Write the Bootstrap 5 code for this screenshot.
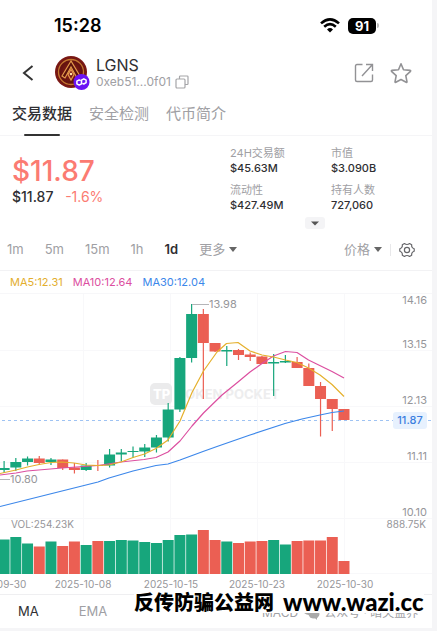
<!DOCTYPE html>
<html lang="zh-CN">
<head>
<meta charset="utf-8">
<meta name="viewport" content="width=device-width, initial-scale=1">
<title>LGNS</title>
<link href="https://cdn.jsdelivr.net/npm/bootstrap@5.3.0/dist/css/bootstrap.min.css" rel="stylesheet">
<style>
body{background:#f5f5f7;font-family:Inter,"Noto Sans CJK SC",sans-serif;color:#2f2f33;padding-right:5px}
.screen{background:#fff;overflow:hidden}
.screen button{border:0;background:none;padding:0;color:inherit;line-height:inherit;display:inline-flex;align-items:center}
.screen svg{display:block;flex:none}
.muted{color:#a0a0a4}
.screen .ink{color:#2f2f33}
.statusbar{height:51px;padding:0 53px 0 54px}
.clock{font-size:18px;font-weight:600;line-height:24px;color:#000}
.batt{width:28px;height:16px;border-radius:5px;background:#000;color:#fff;font-size:13px;font-weight:700;line-height:16px;text-align:center}
.batt-tip{width:2px;height:5px;border-radius:0 2px 2px 0;background:#bbb;margin-left:1px}
.titlebar{height:43px;padding:0 20px}
.token{font-size:16px;line-height:18px}
.addr{font-size:12px;line-height:16px}
.coin{margin:0 6px 0 16px}
.tabs{height:42px;padding:0 12px;gap:17px;font-size:15px;border-bottom:1px solid #f5f5f7}
.tabs .active-tab{font-weight:500;position:relative}
.tabs .active-tab::after{content:"";position:absolute;left:12px;right:12px;bottom:-1px;height:2px;border-radius:1px;background:#333}
.summary{height:81px;padding:9px 12px 0}
.price{font-size:28px;font-weight:500;line-height:34px;margin-top:9px;color:#fb7b72}
.subprice{font-size:14px;line-height:18px;font-weight:500}
.down{color:#fb7b72;font-weight:400;margin-left:8px}
.stats{width:190px;margin:0;font-size:11px;line-height:16px}
.stats dt{font-weight:400}
.stats dd{font-weight:500;margin:0 0 6px;line-height:15px}
.stats .mcap{width:101px}
.expander{padding:0 12px;height:12px}
.screen .expander button{width:20px;height:12px;border-radius:3px;background:#f4f4f6;justify-content:center;margin-left:293px}
.periods{height:41px;padding:0 17px 0 7px;font-size:13px}
.period-list{gap:21px}
.periods .on{font-weight:600;color:#2f2f33}
.bar{width:1px;height:12px;background:#e8e8ea}
.legend-row{height:24px;padding:0 10px;gap:10px;font-size:11px;border-top:1px solid #f2f2f4;border-bottom:1px solid #f7f7f9}
.ma5{color:#e3ae2d}.ma10{color:#dc4fa0}.ma30{color:#3c87ea}
.chart{width:100%;height:auto}
.bottom-tabs{height:34px;padding:0 18px;gap:40px;font-size:13px;border-top:1px solid #efeff1;position:relative}
.behind{position:absolute;top:9px;left:262px;font-size:12px;line-height:18px;white-space:nowrap}
.banner{position:absolute;left:134px;top:-3px;height:21px;background:#fff;color:#000;line-height:22px;gap:9px;white-space:nowrap}
.banner b{font-size:20px;font-weight:900}
.banner .site{font-family:Lato,Inter,sans-serif;font-size:24px;line-height:19px}
</style>
<script src="https://cdn.jsdelivr.net/npm/bootstrap@5.3.0/dist/js/bootstrap.bundle.min.js"></script>
</head>
<body>
<main class="screen">
  <div class="statusbar d-flex align-items-center">
    <span class="clock me-auto">15:28</span>
    <svg class="me-2" width="20" height="15" viewBox="0 0 20 15" fill="none" stroke="#000" stroke-width="2.6"><path d="M1 5.4Q10-2.6 19 5.4M4.2 8.8Q10 3.6 15.8 8.8"/><path d="M7 11.4Q10 8.8 13 11.4L10 14.4Z" fill="#000" stroke="none"/></svg>
    <span class="batt">91</span><span class="batt-tip"></span>
  </div>
  <header class="titlebar d-flex align-items-center">
    <button aria-label="返回"><svg width="16" height="18" viewBox="0 0 16 18" fill="none" stroke="#333" stroke-width="2"><path d="M12.500 2L4 9l8.500 7"/></svg></button>
    <svg class="coin" width="38" height="36" viewBox="0 0 38 36">
      <defs><radialGradient id="coin"><stop offset="0" stop-color="#94211b"/><stop offset=".65" stop-color="#64120f"/><stop offset="1" stop-color="#7e1915"/></radialGradient></defs>
      <circle cx="19" cy="17" r="16" fill="url(#coin)"/>
      <circle cx="19" cy="17" r="12.500" fill="none" stroke="#c47830" stroke-width="1.300"/>
      <path d="M19 6L10 21l3 2 6-11 6 11 3-2Z" fill="#5b100c" stroke="#e49b4c" stroke-width="1.200"/>
      <path d="M19 14.500l3 5-3 5.500-3-5.500Z" fill="#7e1915" stroke="#e49b4c" stroke-width="1.200"/><circle cx="19" cy="19" r="1.300" fill="#ffe0a0"/>
      <circle cx="29.500" cy="27" r="8" fill="#6b12f4"/>
      <path d="M29.500 27v1.800l-2.300 1.300-2.300-1.300v-2.600l2.300-1.300 1.300.7M29.500 27v-1.900l2.300-1.300 2.300 1.300v2.600L31.800 29l-1.300-.7" fill="none" stroke="#fff" stroke-width="1.500" stroke-linejoin="round"/>
    </svg>
    <div class="me-auto">
      <div class="token">LGNS</div>
      <div class="addr muted d-flex align-items-center gap-1">0xeb51...0f01
        <button aria-label="复制"><svg width="14" height="14" viewBox="0 0 14 14" fill="none" stroke="#a5a5a8" stroke-width="1.200"><path d="M4.500 4V1.800Q4.500 1 5.300 1h6.900q.8 0 .8.800v6.900q0 .8-.8.800H10"/><rect x="1" y="4" width="9" height="9" rx="1"/></svg></button></div>
    </div>
    <button aria-label="分享" class="me-3"><svg width="20" height="20" viewBox="0 0 20 20" fill="none" stroke="#929295" stroke-width="1.400"><path d="M8.500 1.500H3Q1.500 1.500 1.500 3v14q0 1.500 1.500 1.500h14q1.500 0 1.500-1.500v-5.500M12 1.500h6.500V8M18.500 1.500L8 13"/></svg></button>
    <button aria-label="收藏"><svg width="22" height="22" viewBox="0 0 22 22" fill="none" stroke="#929295" stroke-width="1.600" stroke-linejoin="round"><path d="M11 1.800l2.500 5.900 6.800.7q.7.300.2.900l-4.700 4.300 1.200 6.200q0 .8-.8.500L11 17.500l-5.200 2.800q-.8.300-.8-.5l1.200-6.200L1.500 9.300q-.5-.6.200-.9l6.800-.7Z"/></svg></button>
  </header>
  <nav class="tabs d-flex align-items-stretch muted">
    <button class="active-tab ink">交易数据</button><button>安全检测</button><button>代币简介</button>
  </nav>
  <section class="summary d-flex justify-content-between">
    <div>
      <div class="price">$11.87</div>
      <div class="subprice">$11.87 <span class="down">-1.6%</span></div>
    </div>
    <dl class="stats d-flex">
      <div class="mcap"><dt class="muted">24H交易额</dt><dd>$45.63M</dd><dt class="muted">流动性</dt><dd>$427.49M</dd></div>
      <div><dt class="muted">市值</dt><dd>$3.090B</dd><dt class="muted">持有人数</dt><dd>727,060</dd></div>
    </dl>
  </section>
  <div class="expander d-flex align-items-start"><button aria-label="展开"><svg width="8" height="5" viewBox="0 0 8 5"><path d="M0 .5h8L4 4.500Z" fill="#555"/></svg></button></div>
  <div class="periods d-flex align-items-center muted">
    <div class="period-list d-flex"><button>1m</button><button>5m</button><button>15m</button><button>1h</button><button class="on">1d</button><button>更多<svg class="ms-1" width="8" height="5" viewBox="0 0 8 5"><path d="M0 0h8L4 5Z" fill="#666"/></svg></button></div>
    <button class="ms-auto">价格<svg class="ms-1" width="8" height="5" viewBox="0 0 8 5"><path d="M0 0h8L4 5Z" fill="#666"/></svg></button>
    <span class="bar mx-2"></span>
    <button aria-label="设置"><svg width="16" height="16" viewBox="0 0 16 16" fill="none" stroke="#66666a" stroke-width="1.200" stroke-linejoin="round"><path d="M5.500 1.500q1.200 1 2.500 1t2.500-1l2.200 1.200q-.2 1.600.4 2.600t2.100 1.500v2.400q-1.500.5-2.100 1.500t-.4 2.600l-2.200 1.200q-1.200-1-2.500-1t-2.500 1l-2.200-1.200q.2-1.600-.4-2.600T.8 9.200V6.800q1.500-.5 2.100-1.500t.4-2.600Z"/><circle cx="8" cy="8" r="2.600"/></svg></button>
  </div>
  <div class="legend-row d-flex align-items-center">
    <span class="ma5">MA5:12.31</span><span class="ma10">MA10:12.64</span><span class="ma30">MA30:12.04</span>
  </div>
  <svg class="chart" viewBox="0 294 432 300" role="img" aria-label="LGNS 日线图">
    <path d="M0 350.500H432M0 406.500H432M0 462.500H432M0 518.500H432M0 573.500H432M83.500 294V574M170.500 294V574M257.500 294V574M344.500 294V574" stroke="#f8f8fa" fill="none"/>
    <g><rect x="150" y="383" width="22" height="22" rx="5" fill="#ebebec"/><text x="153" y="399" font-size="13" font-weight="800" fill="#fff">TP</text><text x="177" y="399" font-size="13" font-weight="700" fill="#ededee">TOKEN POCKET</text></g>
    <path d="M2 420.500H432" stroke="#9fc3f3" stroke-dasharray="3 3"/>
    <g id="bars"></g>
    <g fill="none" stroke-width="1.200" stroke-linejoin="round">
      <path stroke="#3c87ea" d="M0 506.500L50 494 98 482 109 478 133 471 156 465.500 168 464 180 460 203 451.500 217 446.500 250 435 285 423.500 302 419 320 415 332 412.500 344 411"/>
      <path stroke="#dc4fa0" d="M0 475L16 473 27 471 62 468 98 465.500 121 462 144 459.500 156 457.500 168 452 180 441 192 426 203.500 413 222 395 238 382 250 372 262 363.500 273.500 356 285.500 351.500 297 352.500 308.500 360 332 371.500 344 378"/>
      <path stroke="#e5b02c" d="M0 473.500L16 470 27.500 467 39 464.500 51 462.500 62 462 74 463 86 465 98 465.500 109 465 121 462 133 457.500 144.500 454 156 448.500 168 440 180 421 192 392.500 203.500 371 217 352 226.500 343.500 238 342.500 250 351 262 355 273.500 357 285.500 360 297 362.500 308.500 368 320 375 332 384.500 344 396.500"/>
    </g>
    <path d="M192 304.500H209M0 479.500H10" stroke="#b5b5b8"/>
    <g font-size="11" fill="#96969a"><text x="209" y="308">13.98</text><text x="10" y="483">10.80</text></g>
    <g font-size="11" fill="#96969a" text-anchor="end"><text x="427" y="304">14.16</text><text x="427" y="348">13.15</text><text x="427" y="404">12.13</text><text x="427" y="460">11.11</text><text x="427" y="516">10.10</text></g>
    <g font-size="10" fill="#96969a"><text x="11" y="528">VOL:254.23K</text><text x="426" y="528" text-anchor="end">888.75K</text></g>
    <rect x="393" y="412" width="34" height="17" rx="3" fill="#e7f1fe"/><text x="410" y="424" font-size="11" font-weight="500" fill="#3c7fe0" text-anchor="middle">11.87</text>
    <g font-size="10" fill="#96969a" text-anchor="middle"><text x="-3" y="588">2025-09-30</text><text x="83" y="588">2025-10-08</text><text x="171" y="588">2025-10-15</text><text x="257" y="588">2025-10-23</text><text x="345" y="588">2025-10-30</text></g>
  </svg>
  <nav class="bottom-tabs d-flex align-items-center muted">
    <button class="ink">MA</button><button>EMA</button>
    <div class="behind d-flex"><span>MACD</span><svg class="ms-1 me-1" width="18" height="16" viewBox="0 0 18 16" fill="#aaa"><ellipse cx="7" cy="6" rx="6" ry="5"/><ellipse cx="12" cy="10" rx="5.500" ry="4.500"/><path d="M12 13l3 3v-4Z"/></svg><span>公众号 · 暗夫盘界</span></div>
    <div class="banner d-flex"><b>反传防骗公益网</b><b class="site">www.wazi.cc</b></div>
  </nav>
</main>
<script>
// Each day: direction, body top/bottom, wick top/bottom, volume top
const days = [
 [1,468,470,461,473,539.5],[1,462,467.5,458,471,537],[1,458.5,462,456.5,465.5,543.5],[0,458.5,463,456,465,546.5],
 [1,459.5,462,458,465,541.5],[0,459.5,468,459.5,470,546],[0,467.5,470,463,473.5,541.5],[1,465.5,470,463,471,545],
 [0,465,466,460,471,541],[1,454.5,465.5,449,467.5,541],[1,452.5,454.5,449,461.5,540],[1,451,452,446.5,458,540.5],
 [1,447.5,451.5,444,457,542],[1,437.5,447.5,435,452.5,543],[1,409.5,437.5,403,441.5,540],[1,358,409.5,357,412,535],
 [1,314,358,304,362.5,534.5],[0,314,343,309,399,530],[0,343,351.5,343,352,540],[1,350,351.5,346,366,541.5],
 [0,350,355,349,360,543],[0,354.5,357,352.5,361,541.5],[0,356.5,364,356,364,541],[1,362,363.5,354,396,540],
 [1,361,362.5,355,363,544.5],[0,362,368,357,368,541],[0,368,386,363.5,386,540.5],[0,386,399,382,436.5,540.5],
 [0,399,409,399,431,537],[0,409,420,409,420,561]];
const rect = (x, top, w, bottom, fill) => `<rect x="${x}" y="${top}" width="${w}" height="${bottom - top}" fill="${fill}"/>`;
document.getElementById('bars').innerHTML = days.map(([up, t, b, wt, wb, v], i) => {
  const c = 4.1 + i * 11.72, fill = up ? '#17a67c' : '#eb5f53';
  return rect(c - 5.5, t, 11, b, fill) + rect(c - .6, wt, 1.2, wb, fill) + rect(c - 5.5, v, 11, 574, fill);
}).join('');
</script>
</body>
</html>
